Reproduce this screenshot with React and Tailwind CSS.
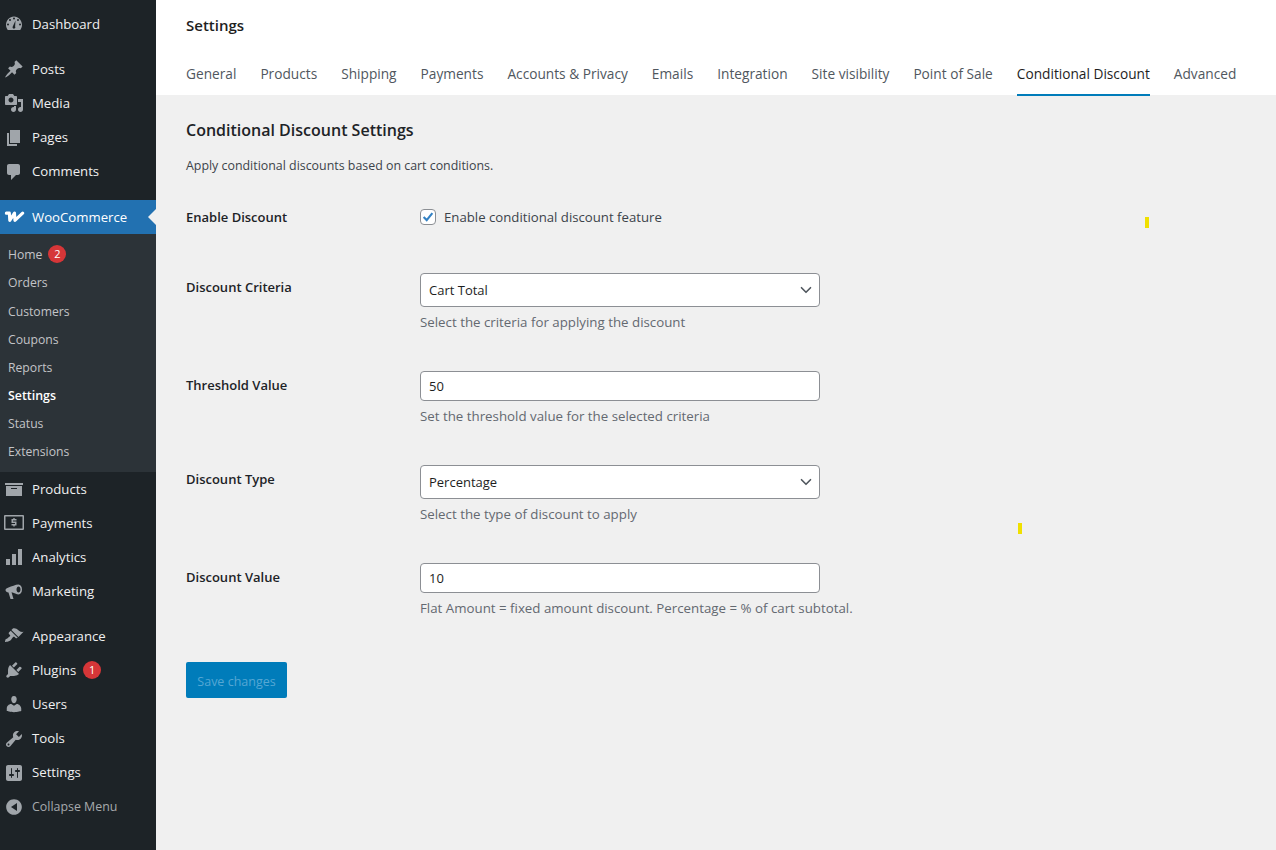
import { ChevronDown } from 'lucide-react';

const font = "font-['Open_Sans',sans-serif]";

function Icon({ children }) {
  return (
    <svg viewBox="0 0 20 20" className="w-5 h-5 fill-[#a0a5aa] shrink-0">
      {children}
    </svg>
  );
}

const icons = {
  dashboard: <path fillRule="evenodd" d="M3.760 16h12.480C17.340 14.570 18 12.790 18 10.860 18 6.200 14.420 2.420 10 2.420S2 6.200 2 10.860c0 1.930.66 3.710 1.760 5.140zM10 3.500a1 1 0 1 1 0 2 1 1 0 0 1 0-2zM6 5a1 1 0 1 1 0 2 1 1 0 0 1 0-2zM14 5a1 1 0 1 1 0 2 1 1 0 0 1 0-2zM4 9.500a1 1 0 1 1 0 2 1 1 0 0 1 0-2zM16 9.500a1 1 0 1 1 0 2 1 1 0 0 1 0-2zM11.500 6.500l-.4 5.900a1.400 1.400 0 1 1-2.200-.1z" />,
  pin: <path d="M10.440 3.020l1.820-1.820 6.360 6.350-1.830 1.820c-1.050-.68-2.480-.57-3.410.36l-.75.75c-.92.93-1.040 2.350-.35 3.410l-1.830 1.820-2.410-2.410-2.800 2.790c-.42.42-3.380 2.710-3.800 2.290s1.860-3.390 2.280-3.810l2.790-2.790L4.100 9.360l1.830-1.820c1.050.69 2.480.57 3.400-.36l.75-.75c.93-.92 1.050-2.350.36-3.410z" />,
  media: <path fillRule="evenodd" d="M13 11V4c0-.55-.45-1-1-1h-1.670L9 1H5L3.670 3H2c-.55 0-1 .45-1 1v7c0 .55.45 1 1 1h10c.55 0 1-.45 1-1zM7 4.500c1.380 0 2.500 1.120 2.500 2.500S8.380 9.500 7 9.500 4.500 8.380 4.500 7 5.620 4.500 7 4.500zM14 6h5v10.500c0 1.380-1.120 2.500-2.500 2.500S14 17.880 14 16.500s1.120-2.500 2.500-2.500c.17 0 .34.020.5.050V9h-3V6zm-4 8.050V13h2v3.500c0 1.380-1.120 2.500-2.500 2.500S7 17.880 7 16.500 8.120 14 9.500 14c.17 0 .34.020.5.050z" />,
  pages: <path d="M6 15V2h10v13H6zm-1 1h8v2H3V5h2v11z" />,
  comments: <path d="M5 2h9c1.100 0 2 .9 2 2v7c0 1.100-.9 2-2 2h-2l-5 5v-5H5c-1.100 0-2-.9-2-2V4c0-1.100.9-2 2-2z" />,
  products: <path fillRule="evenodd" d="M19 4v2H1V4h18zM2 7h16v10H2V7zm11 3V9H7v1h6z" />,
  payments: <path fillRule="evenodd" d="M1 2h18a1 1 0 0 1 1 1v13a1 1 0 0 1-1 1H1a1 1 0 0 1-1-1V3a1 1 0 0 1 1-1zM1.500 3.500v12h17v-12zM9.300 5h1.400v1H12.500v1.400H9v1.200h3.500V12.500h-1.800v1H9.300v-1H7.500v-1.400H11V9.900H7.500V6h1.800z" />,
  analytics: <path d="M18 18V2h-4v16h4zm-6 0V7H8v11h4zm-6 0v-6H2v6h4z" />,
  marketing: <path fillRule="evenodd" d="M14.500 2.500c2 0 3.500 2.200 3.500 5s-1.500 5-3.500 5c-1.500 0-5-1.700-7-2.200L9.500 17H6.500L4.500 10.500C3 10.300 1.500 9.300 1.500 8c0-1.300 1.500-2 3-2.500 3-1 7-3 10-3zM14.500 4.500c-1 0-2 1.300-2 3s1 3 2 3 2-1.300 2-3-1-3-2-3z" />,
  appearance: <path d="M14.480 11.060L7.410 3.990l1.500-1.500c.5-.56 2.300-.47 3.510.32 1.210.8 1.430 1.280 2.910 2.100 1.180.64 2.450 1.260 4.230.85zm-.71.71L6.700 4.700 4.930 6.470c-.39.39-.39 1.020 0 1.410l1.060 1.060c.39.39.39 1.030 0 1.420-.6.600-1.430 1.110-2.210 1.690-.35.26-.7.530-1.010.84C1.430 11.730 1 16 1 16s4.270-.43 5.610-1.770c.31-.31.58-.66.84-1.010.58-.78 1.090-1.610 1.690-2.210.39-.39 1.030-.39 1.420 0l1.060 1.060c.39.39 1.020.39 1.410 0z" />,
  plugins: <path d="M13.110 4.360L9.870 7.600 8 5.730l3.240-3.240c.35-.34 1.050-.2 1.560.32.52.51.66 1.210.31 1.550zm-8 1.770l.91-1.120 9.010 9.010-1.190.84c-.71.71-2.630 1.160-3.820 1.160H6.140L4.900 17.260c-.59.59-1.540.59-2.120 0-.59-.58-.59-1.530 0-2.120l1.240-1.240v-3.880c0-1.130.52-3.070 1.090-3.890zm7.260 3.970l3.240-3.240c.34-.35 1.040-.21 1.550.31.52.51.66 1.210.31 1.550l-3.240 3.250z" />,
  users: <path d="M10 9.250c-2.270 0-2.730-3.440-2.730-3.440C7 4.020 7.820 2 9.970 2c2.160 0 2.980 2.020 2.710 3.810 0 0-.41 3.440-2.680 3.440zm0 2.570L12.720 10c2.390 0 4.520 2.330 4.520 4.530v2.490s-3.650 1.130-7.240 1.130c-3.650 0-7.240-1.130-7.240-1.130v-2.490c0-2.250 1.940-4.480 4.470-4.480z" />,
  tools: <path fillRule="evenodd" d="M16.680 9.770c-1.340 1.340-3.300 1.670-4.950.99l-5.410 6.520c-.99.99-2.590.99-3.580 0s-.99-2.590 0-3.570l6.520-5.420c-.68-1.650-.35-3.610.99-4.950 1.280-1.280 3.120-1.620 4.720-1.060l-2.890 2.890 2.820 2.820 2.860-2.870c.53 1.580.18 3.390-1.080 4.650zM3.810 16.210c.4.390 1.040.39 1.430 0 .4-.4.400-1.040 0-1.430-.39-.4-1.030-.4-1.430 0-.39.39-.39 1.030 0 1.430z" />,
  settings: <path fillRule="evenodd" d="M18 16V4c0-1.100-.9-2-2-2H4c-1.100 0-2 .9-2 2v12c0 1.100.9 2 2 2h12c1.100 0 2-.9 2-2zM8 11h1c.55 0 1 .45 1 1s-.45 1-1 1H8v1.500c0 .28-.22.5-.5.5s-.5-.22-.5-.5V13H6c-.55 0-1-.45-1-1s.45-1 1-1h1V5.500c0-.28.22-.5.5-.5s.5.22.5.5V11zm5-2h-1c-.55 0-1-.45-1-1s.45-1 1-1h1V5.500c0-.28.22-.5.5-.5s.5.22.5.5V7h1c.55 0 1 .45 1 1s-.45 1-1 1h-1v5.500c0 .28-.22.5-.5.5s-.5-.22-.5-.5V9z" />,
};

const topGroups = [
  [['Dashboard', 'dashboard']],
  [['Posts', 'pin'], ['Media', 'media'], ['Pages', 'pages'], ['Comments', 'comments']],
];
const midGroup = [['Products', 'products'], ['Payments', 'payments'], ['Analytics', 'analytics'], ['Marketing', 'marketing']];
const lastGroup = [['Appearance', 'appearance'], ['Plugins', 'plugins', 1], ['Users', 'users'], ['Tools', 'tools'], ['Settings', 'settings']];
const subItems = ['Home', 'Orders', 'Customers', 'Coupons', 'Reports', 'Settings', 'Status', 'Extensions'];
const tabs = ['General', 'Products', 'Shipping', 'Payments', 'Accounts & Privacy', 'Emails', 'Integration', 'Site visibility', 'Point of Sale', 'Conditional Discount', 'Advanced'];

function Badge({ n }) {
  return (
    <span className="w-[18px] h-[18px] rounded-full bg-[#d63638] text-white text-[11px] leading-[18px] text-center">{n}</span>
  );
}

function MenuItem({ label, icon, badge }) {
  return (
    <div className="h-[34.2px] flex items-center text-[13.2px] text-[#f0f0f1]">
      <div className="w-7 flex justify-center mr-1"><Icon>{icons[icon]}</Icon></div>
      <span className="pt-[1px]">{label}</span>
      {badge && <span className="ml-[7px] flex"><Badge n={badge} /></span>}
    </div>
  );
}

function MenuGroup({ items, className = '' }) {
  return (
    <div className={className}>
      {items.map(([label, icon, badge]) => (
        <MenuItem key={label} label={label} icon={icon} badge={badge} />
      ))}
    </div>
  );
}

function Sidebar() {
  return (
    <aside className="w-[156px] shrink-0 bg-[#1d2327] pt-[7px]">
      {topGroups.map((items, i) => <MenuGroup key={i} items={items} className="mb-[11px]" />)}
      <div className="relative h-[34px] bg-[#2271b1] flex items-center text-[13.2px] text-white">
        <div className="w-7 flex justify-center mr-1">
          <svg viewBox="0 0 24 14" className="w-[21px] h-[12px] fill-none stroke-white stroke-[3.6]" strokeLinejoin="round" strokeLinecap="round">
            <path d="M2.500 2.500H6L6.500 11 12 2.500 12.500 11 21.500 2.500" />
          </svg>
        </div>
        <span className="pt-[1px]">WooCommerce</span>
        <span className="absolute right-0 top-[9px] w-0 h-0 border-y-8 border-y-transparent border-r-8 border-r-[#f0f0f0]" />
      </div>
      <div className="bg-[#2c3338] pt-[6.5px] pb-[6.5px] h-[238px] text-[12.2px] text-[#c3c4c7]">
        {subItems.map((s) => (
          <div key={s} className={`h-[28.12px] pl-2 flex items-center ${s === 'Settings' ? 'font-semibold text-white text-[12.4px]' : ''}`}>
            <span className="pt-[2px]">{s}</span>
            {s === 'Home' && <span className="ml-[6px] flex"><Badge n={2} /></span>}
          </div>
        ))}
      </div>
      <MenuGroup items={midGroup} className="mb-[10.2px]" />
      <MenuGroup items={lastGroup} />
      <div className="h-[34px] flex items-center text-[12.4px] text-[#a7aaad]">
        <div className="w-7 flex justify-center mr-1">
          <svg viewBox="0 0 20 20" className="w-5 h-5 fill-[#a0a5aa]">
            <path fillRule="evenodd" d="M10 2.160c4.330 0 7.840 3.510 7.840 7.840S14.330 17.840 10 17.840 2.160 14.330 2.160 10 5.670 2.160 10 2.160zM13 14V6l-6 4z" />
          </svg>
        </div>
        <span className="pt-[1px]">Collapse Menu</span>
      </div>
    </aside>
  );
}

function Row({ label, children, className, labelClass = 'pt-[5px]' }) {
  return (
    <div className={`flex ${className}`}>
      <div className={`w-[234px] shrink-0 font-semibold text-[13px] text-[#1d2327] ${labelClass}`}>{label}</div>
      <div>{children}</div>
    </div>
  );
}

function Help({ children }) {
  return <p className="mt-[6px] text-[13.3px] leading-[18px] text-[#646970]">{children}</p>;
}

function Select({ value }) {
  return (
    <div className="w-[400px] h-[34px] bg-white border border-[#8c8f94] rounded-[4px] pl-2 pr-1 flex items-center justify-between text-[13px] text-[#1e1e1e]">
      <span className="pt-[2px]">{value}</span>
      <ChevronDown className="w-[18px] h-[18px] text-[#50575e]" strokeWidth={2.2} />
    </div>
  );
}

function TextInput({ value }) {
  return (
    <input
      readOnly
      value={value}
      className="block w-[400px] h-[30px] bg-white border border-[#8c8f94] rounded-[4px] px-2 text-[13px] text-[#1e1e1e] outline-none"
    />
  );
}

export default function App() {
  return (
    <div className={`relative flex min-h-[850px] bg-[#f0f0f0] ${font}`}>
      <Sidebar />
      <main className="flex-1 min-w-0">
        <header className="bg-white h-[95px] pl-[30px]">
          <h1 className="pt-[15px] text-[15px] leading-[20px] font-semibold text-[#1e1e1e]">Settings</h1>
          <nav className="mt-[24px] flex gap-6 text-[13.7px] font-medium text-[#50575e]">
            {tabs.map((t) => (
              <span
                key={t}
                className={`h-[37px] pt-[5px] leading-[20px] whitespace-nowrap ${t === 'Conditional Discount' ? 'text-[#1e1e1e] border-b-2 border-[#007cba]' : ''}`}
              >
                {t}
              </span>
            ))}
          </nav>
        </header>
        <div className="pl-[30px]">
          <h2 className="mt-[24px] text-[16px] leading-[22px] font-semibold text-[#1d2327]">Conditional Discount Settings</h2>
          <p className="mt-[16px] text-[12.4px] leading-[18px] text-[#3c434a]">Apply conditional discounts based on cart conditions.</p>
          <Row label="Enable Discount" labelClass="" className="mt-[33px] leading-[18px] items-center">
            <label className="flex items-center gap-2 text-[13.2px] text-[#3c434a]">
              <span className="w-4 h-4 bg-white border border-[#8c8f94] rounded-[4px] flex items-center justify-center">
                <svg viewBox="0 0 16 16" className="w-[14px] h-[14px] fill-none stroke-[#3582c4] stroke-[2.4]"><path d="M3 8l3.500 3.500L13 3.500" /></svg>
              </span>
              Enable conditional discount feature
            </label>
          </Row>
          <Row label="Discount Criteria" className="mt-[47px]">
            <Select value="Cart Total" />
            <Help>Select the criteria for applying the discount</Help>
          </Row>
          <Row label="Threshold Value" className="mt-[40px]">
            <TextInput value="50" />
            <Help>Set the threshold value for the selected criteria</Help>
          </Row>
          <Row label="Discount Type" className="mt-[40px]">
            <Select value="Percentage" />
            <Help>Select the type of discount to apply</Help>
          </Row>
          <Row label="Discount Value" className="mt-[40px]">
            <TextInput value="10" />
            <Help>Flat Amount = fixed amount discount. Percentage = % of cart subtotal.</Help>
          </Row>
          <button className="mt-[45px] w-[101px] h-[36px] pt-[5px] rounded-[2px] bg-[#007cba] text-[12.5px] text-[#55a7d4]">Save changes</button>
        </div>
      </main>
      <span className="absolute left-[1145px] top-[217px] w-1 h-[11px] bg-[#f0e000]" />
      <span className="absolute left-[1018px] top-[523px] w-1 h-[11px] bg-[#f0e000]" />
    </div>
  );
}
